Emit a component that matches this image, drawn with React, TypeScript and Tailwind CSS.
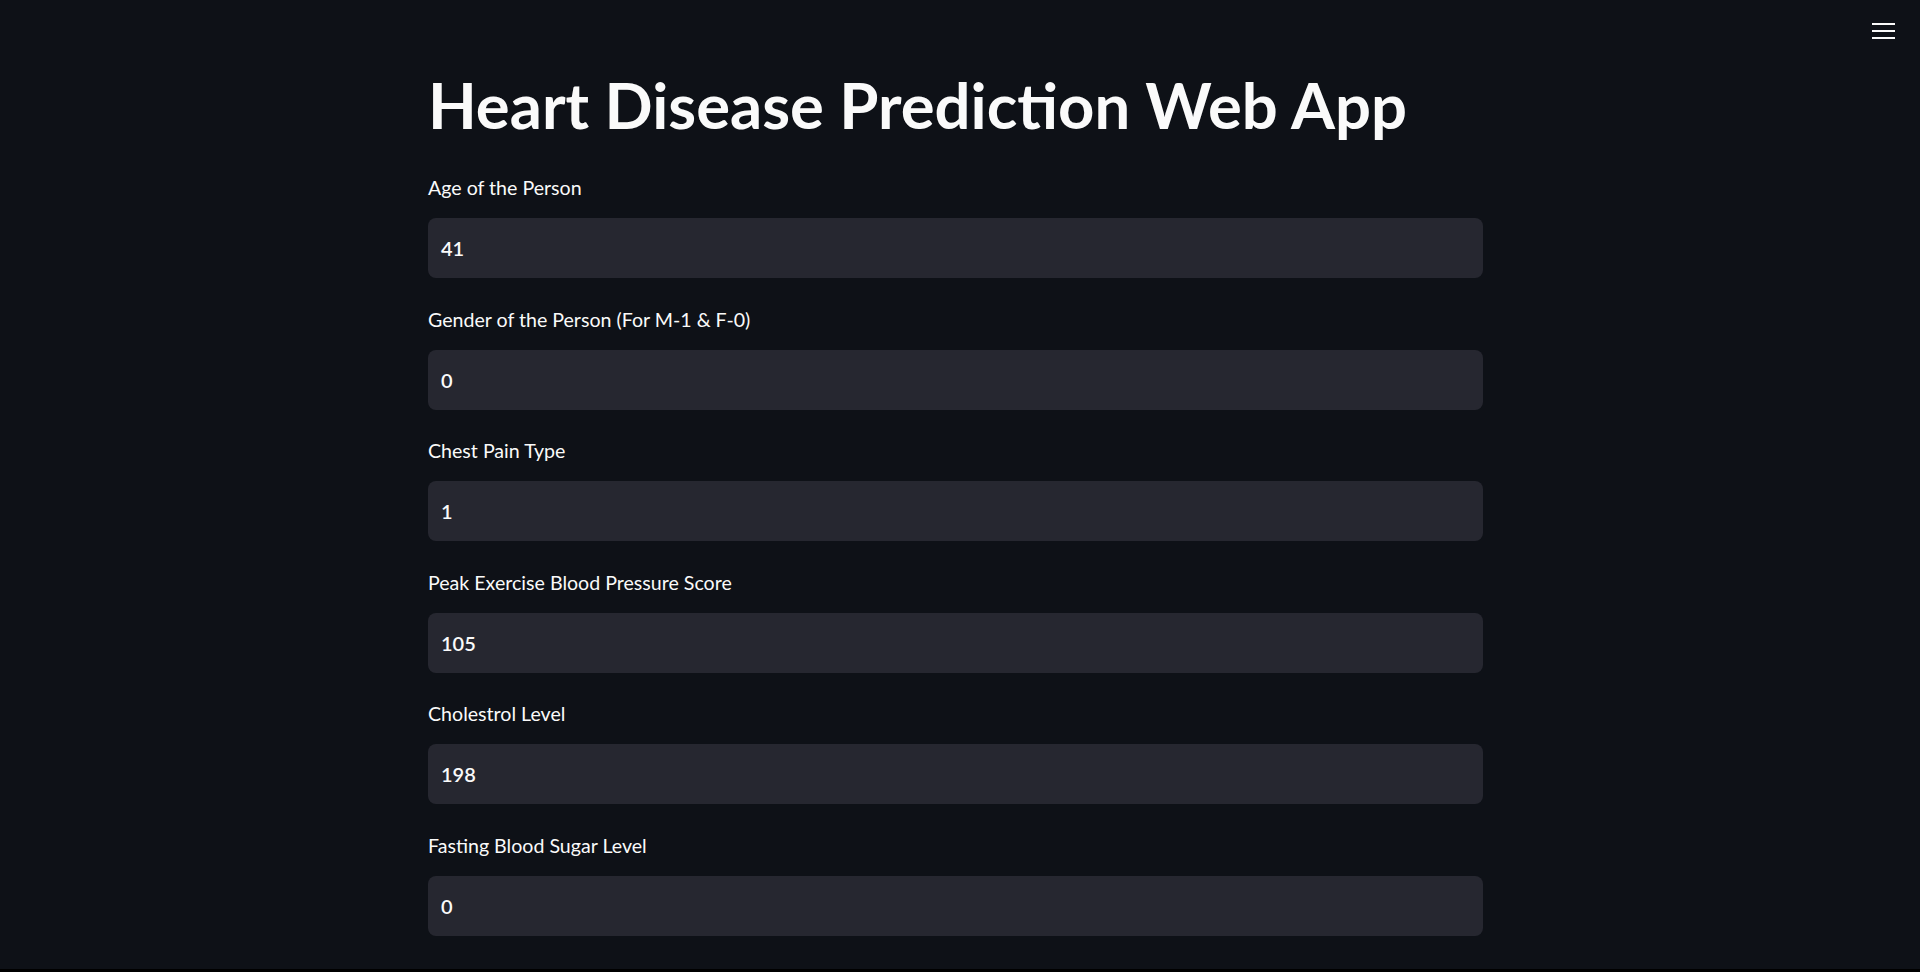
import React from "react";

const fields: { label: string; value: string }[] = [
  { label: "Age of the Person", value: "41" },
  { label: "Gender of the Person (For M-1 & F-0)", value: "0" },
  { label: "Chest Pain Type", value: "1" },
  { label: "Peak Exercise Blood Pressure Score", value: "105" },
  { label: "Cholestrol Level", value: "198" },
  { label: "Fasting Blood Sugar Level", value: "0" },
];

export default function App() {
  return (
    <div
      className="relative h-[972px] w-full overflow-hidden bg-[#0e1117] text-[#fafafa]"
      style={{ fontFamily: "Lato, 'Noto Sans', sans-serif" }}
    >
      <button className="absolute right-[24px] top-[23px] flex h-[16px] w-[24px] flex-col justify-between">
        <span className="block h-[2px] w-[23px] bg-[#fafafa]" />
        <span className="block h-[2px] w-[23px] bg-[#fafafa]" />
        <span className="block h-[2px] w-[23px] bg-[#fafafa]" />
      </button>
      <div className="ml-[428px] w-[1055px] pt-[65px]">
        <h1 className="text-[63.4px] font-bold leading-[80px]">
          Heart Disease Prediction Web App
        </h1>
        <div className="mt-[31px] flex flex-col gap-[29.6px]">
          {fields.map((f) => (
            <div key={f.label} className="flex flex-col gap-[18px]">
              <label className="text-[19.6px] leading-[24px]">{f.label}</label>
              <div className="flex h-[60px] items-center rounded-[8px] bg-[#262730] px-[13px] text-[20px] font-semibold">
                {f.value}
              </div>
            </div>
          ))}
        </div>
      </div>
      <div className="absolute bottom-0 left-0 h-[3px] w-full bg-black" />
    </div>
  );
}
